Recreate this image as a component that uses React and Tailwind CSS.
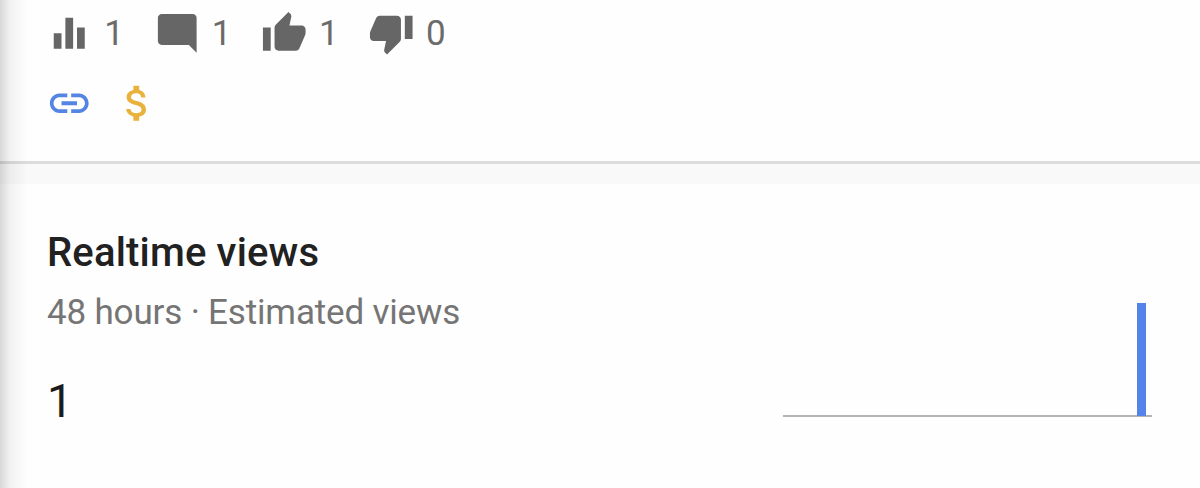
const Icon = ({ path, className = '' }) => (
  <svg viewBox="0 0 24 24" fill="currentColor" className={`size-[46.5px] shrink-0 ${className}`}>
    <path d={path} />
  </svg>
);

const stats = [
  {
    id: 'views',
    value: 1,
    path: 'M10 20h4V4h-4v16zm-6 0h4v-8H4v8zM16 9v11h4V9h-4z',
    className: 'w-[107.5px]',
  },
  {
    id: 'comments',
    value: 1,
    path: 'M21.99 4c0-1.1-.89-2-1.99-2H4c-1.1 0-2 .9-2 2v12c0 1.1.9 2 2 2h14l4 4-.01-18z',
    className: 'w-[107.3px]',
  },
  {
    id: 'likes',
    value: 1,
    path: 'M1 21h4V9H1v12zm22-11c0-1.1-.9-2-2-2h-6.31l.95-4.57.03-.32c0-.41-.17-.79-.44-1.06L14.17 1 7.59 7.59C7.22 7.95 7 8.45 7 9v10c0 1.1.9 2 2 2h9c.83 0 1.54-.5 1.84-1.22l3.02-7.05c.09-.23.14-.47.14-.73v-2z',
    className: 'w-[107px]',
  },
  {
    id: 'dislikes',
    value: 0,
    path: 'M15 3H6c-.83 0-1.54.5-1.84 1.22l-3.02 7.05c-.09.23-.14.47-.14.73v2c0 1.1.9 2 2 2h6.31l-.95 4.57-.03.32c0 .41.17.79.44 1.06L9.83 23l6.59-6.59c.36-.36.58-.86.58-1.41V5c0-1.1-.9-2-2-2zm4 0v12h4V3h-4z',
    className: 'w-[107px]',
  },
];

const LINK_PATH =
  'M3.9 12c0-1.71 1.39-3.1 3.1-3.1h4V7H7c-2.76 0-5 2.24-5 5s2.24 5 5 5h4v-1.9H7c-1.71 0-3.1-1.39-3.1-3.1zM8 13h8v-2H8v2zm9-6h-4v1.9h4c1.71 0 3.1 1.39 3.1 3.1s-1.39 3.1-3.1 3.1h-4V17h4c2.76 0 5-2.24 5-5s-2.24-5-5-5z';
const MONEY_PATH =
  'M11.8 10.9c-2.27-.59-3-1.2-3-2.15 0-1.09 1.01-1.85 2.7-1.85 1.78 0 2.44.85 2.5 2.1h2.21c-.07-1.72-1.12-3.3-3.21-3.81V3h-3v2.16c-1.94.42-3.5 1.68-3.5 3.61 0 2.31 1.91 3.46 4.7 4.13 2.5.6 3 1.48 3 2.41 0 .69-.49 1.79-2.7 1.79-2.06 0-2.87-.92-2.98-2.1h-2.2c.12 2.19 1.76 3.42 3.68 3.83V21h3v-2.15c1.95-.37 3.5-1.5 3.5-3.55 0-2.84-2.43-3.81-4.7-4.4z';

// Hourly views, oldest first
const hourlyViews = [...Array(46).fill(0), 1];

const ViewsChart = () => (
  <div className="relative flex h-[113px] w-[369px] items-end pr-[6px]">
    <div className="absolute inset-x-0 -bottom-px h-[2px] bg-[#b4b4b4]" />
    {hourlyViews.map((views, i) =>
      views > 0 ? (
        <div key={i} className="relative ml-auto w-[9px] bg-[#5484ea]" style={{ height: `${views * 100}%` }} />
      ) : null
    )}
  </div>
);

export default function App() {
  return (
    <div className="relative h-[488px] w-full overflow-hidden bg-[#fefefe] font-['Roboto',sans-serif]">
      <header className="h-[161px] pt-[10.3px] pl-[46.3px]">
        <div className="flex text-[#666666]">
          {stats.map(({ id, value, path, className }) => (
            <div key={id} className={`flex items-center ${className}`}>
              <Icon path={path} />
              <span className="ml-[11.5px] text-[35px] leading-[46px] text-[#6b6b6b]">{value}</span>
            </div>
          ))}
        </div>
        <div className="mt-[23.4px] flex gap-[21.4px]">
          <Icon path={LINK_PATH} className="text-[#5484e4]" />
          <Icon path={MONEY_PATH} className="text-[#e9b23c]" />
        </div>
      </header>

      <div className="h-[23px] border-t-[3px] border-[#dcdcdc] bg-[#f9f9f9]" />

      <section className="flex justify-between pt-[45px] pr-[48px] pl-[47px]">
        <div>
          <h2 className="text-[40px] leading-[48px] font-medium tracking-[0.17px] text-[#212121]">Realtime views</h2>
          <p className="mt-[15px] text-[35px] leading-[42px] tracking-[-0.17px] text-[#757575]">
            48 hours · Estimated views
          </p>
          <p className="mt-[40px] text-[46px] leading-[54px] text-[#1c1c1c]">1</p>
        </div>
        <div className="pt-[74px]">
          <ViewsChart />
        </div>
      </section>

      {/* Shadow cast by the side panel */}
      <div className="pointer-events-none absolute inset-y-0 left-0 w-[28px] bg-linear-to-r from-black/15 via-black/5 via-35% to-transparent" />
    </div>
  );
}
